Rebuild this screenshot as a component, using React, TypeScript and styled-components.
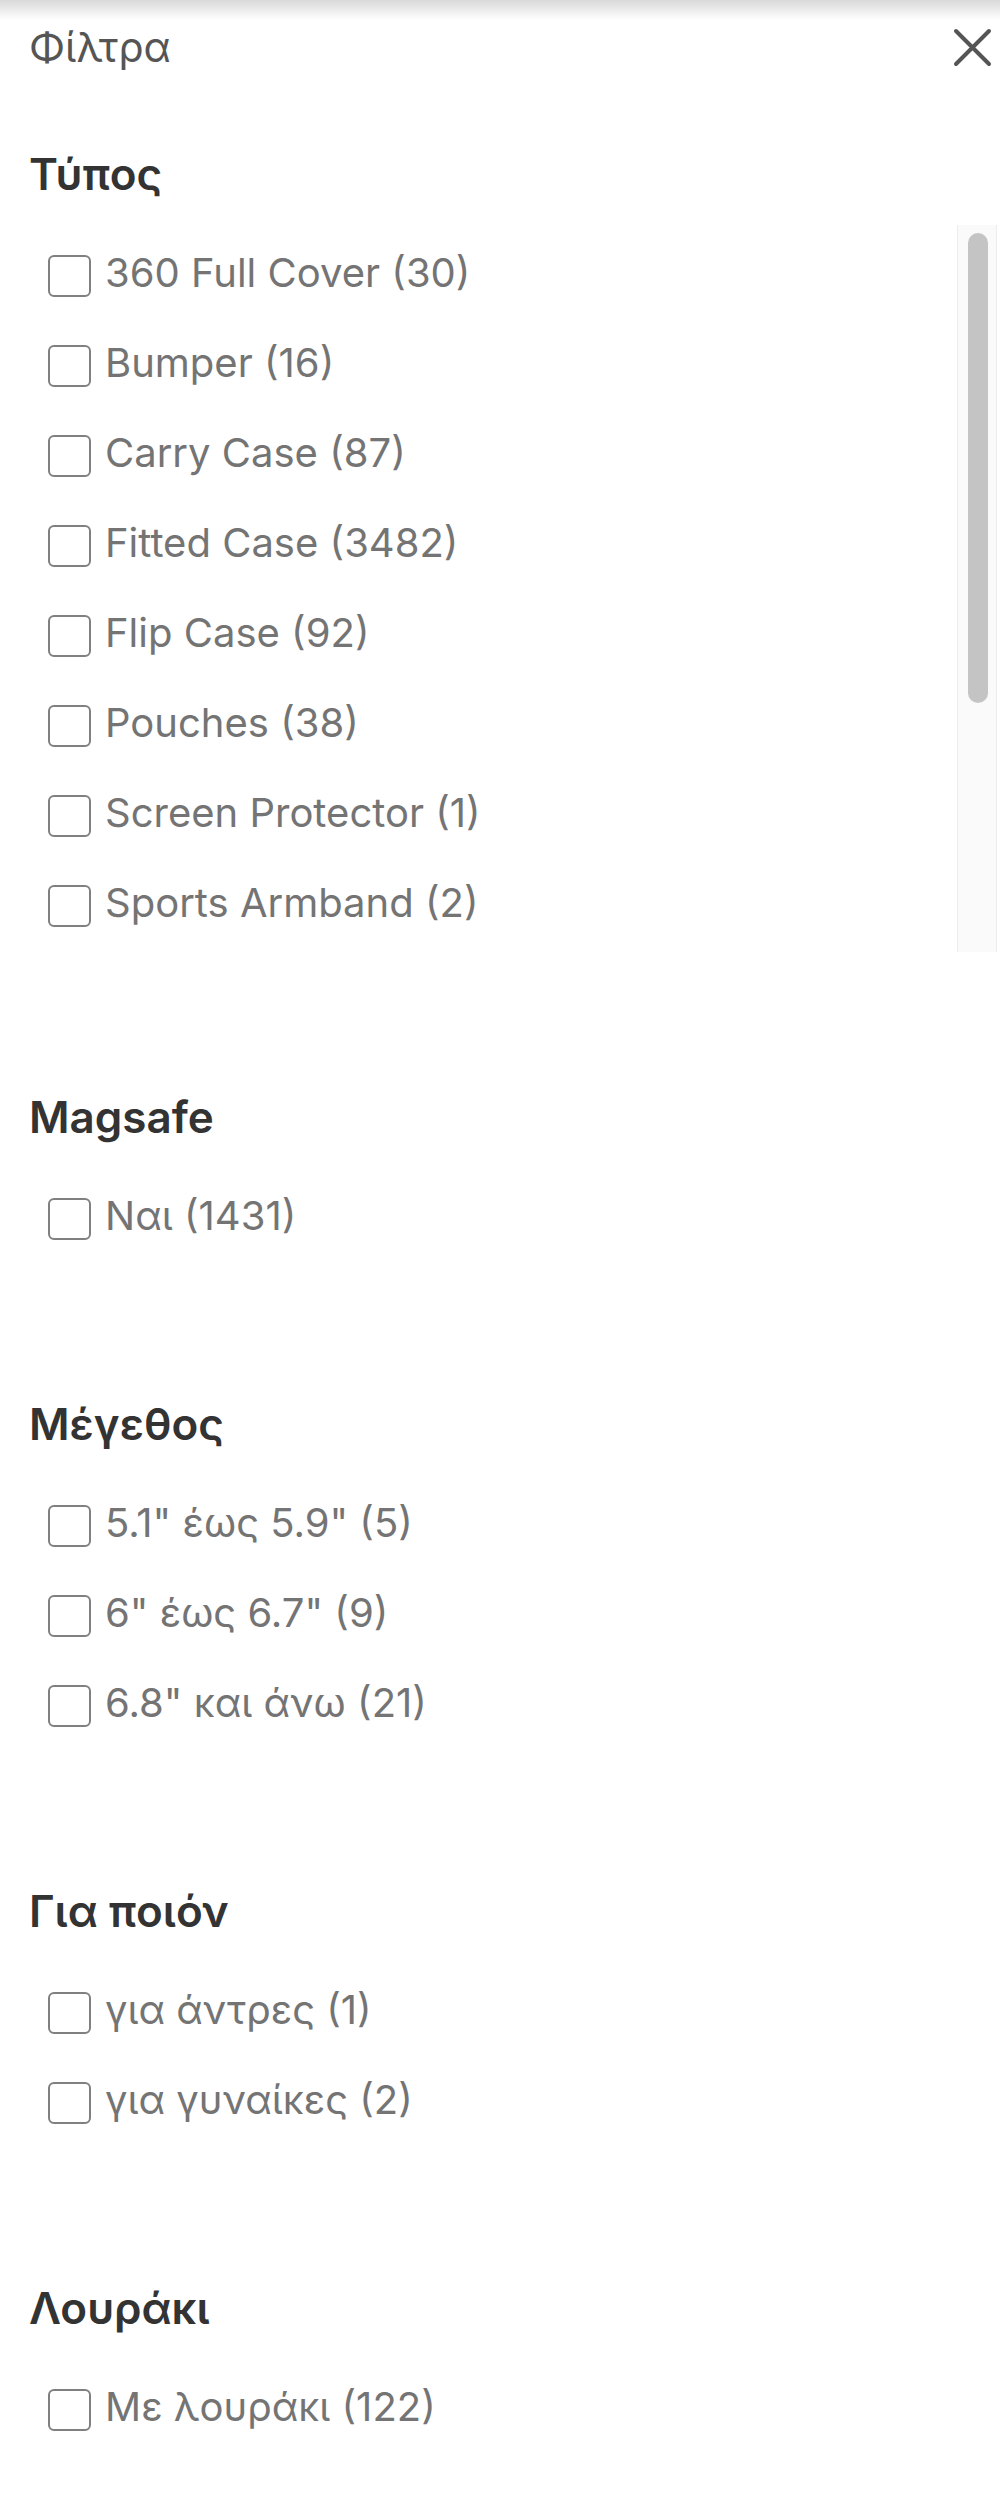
import React from "react";
import styled, { createGlobalStyle } from "styled-components";

const GlobalStyle = createGlobalStyle`
  html, body { margin: 0; padding: 0; background: #ffffff; }
  body { font-family: Inter, "Noto Sans", "DejaVu Sans", sans-serif; }
  * { box-sizing: border-box; }
`;

const Panel = styled.div`
  width: 1000px;
  min-height: 2500px;
  background: #ffffff;
  display: flex;
  flex-direction: column;
`;

const Shade = styled.div`
  height: 20px;
  background: linear-gradient(#d9d9d9, #ffffff);
`;

const Header = styled.header`
  display: flex;
  align-items: center;
  justify-content: space-between;
  height: 55px;
  padding: 0 8px 0 29px;
`;

const Title = styled.h1`
  margin: 0;
  font-size: 41px;
  font-weight: 400;
  line-height: 55px;
  color: #555555;
`;

const CloseButton = styled.button`
  width: 39px;
  height: 39px;
  padding: 0;
  border: 0;
  background: none;
  color: #555555;
  display: flex;
  align-items: center;
  justify-content: center;
  cursor: pointer;
`;

const Section = styled.section<{ $top: number }>`
  margin-top: ${(p) => p.$top}px;
  padding: 0 3px 0 29px;
`;

const Heading = styled.h2`
  margin: 0;
  height: 52px;
  font-size: 44px;
  font-weight: 600;
  line-height: 52px;
  color: #333333;
`;

const Options = styled.div`
  margin-top: 31px;
  padding-left: 19px;
  display: flex;
  flex-direction: column;
`;

const ScrollArea = styled.div`
  margin-top: 25px;
  height: 727px;
  display: flex;
`;

const ScrollOptions = styled.div`
  flex: 1;
  min-width: 0;
  padding: 6px 0 0 19px;
  overflow-y: auto;
  scrollbar-width: none;
  display: flex;
  flex-direction: column;
  &::-webkit-scrollbar { display: none; }
`;

const ScrollTrack = styled.div`
  flex: none;
  width: 40px;
  height: 100%;
  padding: 8px 9px 0 10px;
  background: #fafafa;
  border-left: 1px solid #ececec;
  border-right: 1px solid #ececec;
`;

const ScrollThumb = styled.div<{ $length: number }>`
  width: 20px;
  height: ${(p) => p.$length}px;
  border-radius: 10px;
  background: #c4c4c4;
`;

const Row = styled.label`
  flex: none;
  display: flex;
  align-items: center;
  gap: 14px;
  height: 90px;
  cursor: pointer;
`;

const Box = styled.input.attrs({ type: "checkbox" })`
  appearance: none;
  margin: 0;
  flex: none;
  width: 43px;
  height: 42px;
  border: 2.5px solid #808080;
  border-radius: 6px;
  background: #ffffff;
`;

const Text = styled.span`
  font-size: 40px;
  line-height: 48px;
  color: #747474;
  white-space: nowrap;
  transform: translateY(-3px);
`;

type Opt = { label: string; count: number };

const Option = ({ label, count }: Opt) => (
  <Row>
    <Box />
    <Text>
      {label} ({count})
    </Text>
  </Row>
);

const types: Opt[] = [
  { label: "360 Full Cover", count: 30 },
  { label: "Bumper", count: 16 },
  { label: "Carry Case", count: 87 },
  { label: "Fitted Case", count: 3482 },
  { label: "Flip Case", count: 92 },
  { label: "Pouches", count: 38 },
  { label: "Screen Protector", count: 1 },
  { label: "Sports Armband", count: 2 },
];

const groups: { title: string; top: number; items: Opt[] }[] = [
  { title: "Magsafe", top: 139, items: [{ label: "Ναι", count: 1431 }] },
  {
    title: "Μέγεθος",
    top: 134,
    items: [
      { label: '5.1" έως 5.9"', count: 5 },
      { label: '6" έως 6.7"', count: 9 },
      { label: '6.8" και άνω', count: 21 },
    ],
  },
  {
    title: "Για ποιόν",
    top: 134,
    items: [
      { label: "για άντρες", count: 1 },
      { label: "για γυναίκες", count: 2 },
    ],
  },
  { title: "Λουράκι", top: 134, items: [{ label: "Με λουράκι", count: 122 }] },
];

export default function App() {
  return (
    <>
      <GlobalStyle />
      <Panel>
        <Shade />
        <Header>
          <Title>Φίλτρα</Title>
          <CloseButton aria-label="Κλείσιμο">
            <svg width="39" height="39" viewBox="0 0 39 39" fill="none">
              <path d="M3 3L36 36M36 3L3 36" stroke="currentColor" strokeWidth="4" strokeLinecap="round" />
            </svg>
          </CloseButton>
        </Header>
        <Section $top={73}>
          <Heading>Τύπος</Heading>
          <ScrollArea>
            <ScrollOptions>
              {types.map((o) => (
                <Option key={o.label} {...o} />
              ))}
            </ScrollOptions>
            <ScrollTrack>
              <ScrollThumb $length={470} />
            </ScrollTrack>
          </ScrollArea>
        </Section>
        {groups.map((g) => (
          <Section key={g.title} $top={g.top}>
            <Heading>{g.title}</Heading>
            <Options>
              {g.items.map((o) => (
                <Option key={o.label} {...o} />
              ))}
            </Options>
          </Section>
        ))}
      </Panel>
    </>
  );
}
